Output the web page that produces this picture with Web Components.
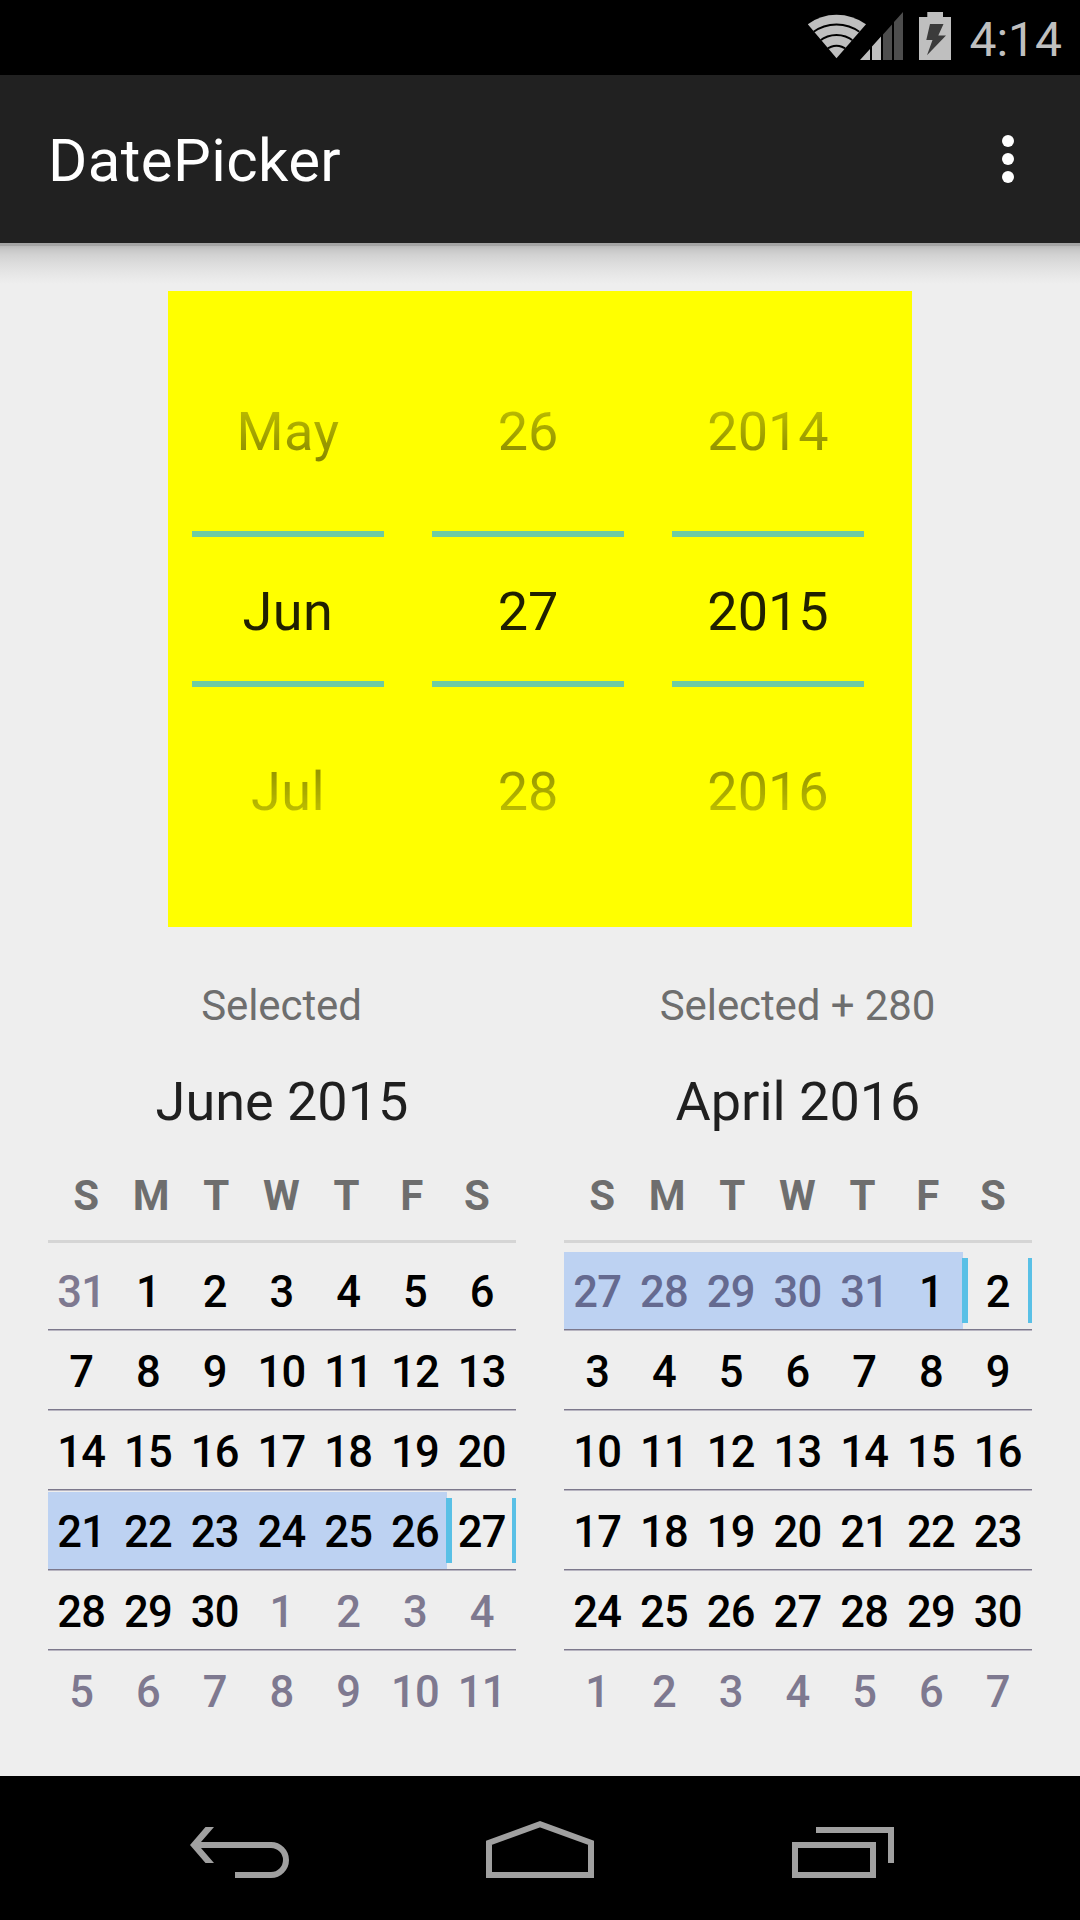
<!DOCTYPE html>
<html lang="en">
<head>
<meta charset="utf-8">
<title>DatePicker</title>
<style>
html,body{margin:0;padding:0}
body{width:1080px;height:1920px;overflow:hidden;background:#eee;font-family:Roboto,"Noto Sans",sans-serif}
</style>
</head>
<body>
<dp-screen>
  <dp-status-bar slot="status" time="4:14"></dp-status-bar>
  <dp-app-bar slot="appbar">DatePicker</dp-app-bar>
  <dp-date-spinner>
    <dp-wheel values="May,Jun,Jul" style="letter-spacing:.5px"></dp-wheel>
    <dp-wheel values="26,27,28"></dp-wheel>
    <dp-wheel values="2014,2015,2016"></dp-wheel>
  </dp-date-spinner>
  <dp-calendars>
    <dp-calendar year="2015" month="6" day="27">Selected</dp-calendar>
    <dp-calendar year="2016" month="4" day="2">Selected + 280</dp-calendar>
  </dp-calendars>
  <dp-nav-bar slot="nav"></dp-nav-bar>
</dp-screen>
<script>
class Base extends HTMLElement {
  connectedCallback() {
    if (!this.shadowRoot) this.attachShadow({mode: 'open'}).innerHTML = this.view();
  }
}

customElements.define('dp-screen', class extends Base {
  view() { return `<style>
    :host{display:flex;flex-direction:column;width:1080px;height:1920px}
    main{flex:1;display:flex;flex-direction:column;align-items:center;padding-top:48px;gap:48px;
      background:linear-gradient(#a4a4a4 0 3px,#bababa 3px,#c8c8c8 7px,#d2d2d2 12px,#dcdcdc 20px,#e3e3e3 27px,#e9e9e9 34px,#eee 41px)}
    </style><slot name="status"></slot><slot name="appbar"></slot><main><slot></slot></main><slot name="nav"></slot>`; }
});

customElements.define('dp-status-bar', class extends Base {
  view() { return `<style>
    :host{display:flex;justify-content:flex-end;height:75px;background:#000;color:#bfbfbf;padding-right:18px}
    span{font-size:48px;line-height:79px;height:75px}
    svg{display:block;margin-right:16px}
    </style>
    <svg width="146" height="75" viewBox="807 0 146 75">
      <clipPath id="fan"><path d="M836.5 58.5 805 21.500V0H868V21.500Z"/></clipPath>
      <path fill="#bfbfbf" d="M836.500 58.200 807.800 24.300Q820.500 14.800 836.500 14.800T866 24.300Z"/>
      <g clip-path="url(#fan)" fill="none" stroke="#000" stroke-width="2">
        <path d="M812.500 32.500Q823.500 24.600 836.500 24.600T860.500 32.500"/>
        <path d="M819.500 41Q827 35 836.500 35T853.500 41"/>
        <path d="M826.500 49.500Q831 45.700 836.500 45.700T846.500 49.500"/>
      </g>
      <path fill="#bfbfbf" d="M860 60 870 49V60ZM872 60V46.500L881 36.500V60Z"/>
      <path fill="#4d4d4d" d="M883 60V34.500L892 24.500V60ZM894 60V22L903 12V60Z"/>
      <path fill="#bfbfbf" d="M927.300 12H943V17H951V60H919V17H927.300Z"/>
      <path fill="#3b3b3b" d="M930 24H943.500L938.300 35.500H946L927 55.300 932.500 40H926.300Z"/>
    </svg><span>${this.getAttribute('time')}</span>`; }
});

customElements.define('dp-app-bar', class extends Base {
  view() { return `<style>
    :host{display:flex;justify-content:space-between;height:168px;background:#212121;color:#fff;padding:0 66px 0 48px;font-size:60px;letter-spacing:.38px;line-height:172px;box-sizing:border-box}
    .more{display:flex;flex-direction:column;gap:6px;padding-top:60px}
    i{width:12px;height:12px;border-radius:50%;background:#fff}
    </style><slot></slot><div class="more"><i></i><i></i><i></i></div>`; }
});

customElements.define('dp-date-spinner', class extends Base {
  view() { return `<style>
    :host{display:flex;gap:48px;width:744px;height:636px;padding:48px 24px;box-sizing:border-box;background:#ff0}
    </style><slot></slot>`; }
});

customElements.define('dp-wheel', class extends Base {
  view() { return `<style>
    :host{display:grid;width:192px;height:540px}
    .list,.frame{grid-area:1/1}
    .list{height:537px;padding-top:3px;overflow:hidden;text-align:center;font-size:54px;line-height:180px;color:rgba(0,0,0,.87);
      -webkit-mask-image:linear-gradient(transparent,#000 228px,#000 312px,transparent);mask-image:linear-gradient(transparent,#000 228px,#000 312px,transparent)}
    .frame{align-self:center;height:144px;border:solid #6ecba2;border-width:6px 0}
    </style><div class="list">${this.getAttribute('values').split(',').map(v => `<div>${v}</div>`).join('')}</div><div class="frame"></div>`; }
});

customElements.define('dp-calendars', class extends Base {
  view() { return `<style>:host{display:flex;gap:48px}</style><slot></slot>`; }
});

customElements.define('dp-calendar', class extends Base {
  view() {
    const y = +this.getAttribute('year'), m = +this.getAttribute('month') - 1, d = +this.getAttribute('day');
    const first = new Date(y, m, 1);
    const lead = first.getDay();
    const title = first.toLocaleString('en-US', {month: 'long'}) + ' ' + y;
    let weeks = '';
    for (let w = 0; w < 6; w++) {
      const days = [];
      for (let c = 0; c < 7; c++) days.push(new Date(y, m, 1 - lead + w * 7 + c));
      const active = days.some(t => t.getMonth() === m && t.getDate() === d);
      weeks += `<div class="week${active ? ' active' : ''}">${days.map(t =>
        `<span${t.getMonth() !== m ? ' class="out"' : ''}>${t.getDate()}</span>`).join('')}</div>`;
    }
    return `<style>
    :host{display:flex;flex-direction:column;width:468px;text-align:center;
      --rule:linear-gradient(#7c788c,#7c788c) 0 78px/100% 1px no-repeat,linear-gradient(#b8b5c1,#b8b5c1) 0 79px/100% 1px no-repeat}
    .label{font-size:42px;letter-spacing:-.1px;padding-right:1px;line-height:61px;height:60px;color:#6e6e6e}
    h2{margin:18px 0 0;font-size:54px;font-weight:400;line-height:97px;height:97px;color:#1f1f1f}
    .names{display:flex;height:90px;padding:0 6.5px 0 5.5px;border-bottom:3px solid #d5d5d5;margin-bottom:8px;font-size:42px;font-weight:700;line-height:91px;color:#6e6e6e}
    .names span,.week span{flex:1 1 0;min-width:0}
    .week{display:flex;box-sizing:border-box;height:80px;padding-right:1px;font-size:43.5px;letter-spacing:-.7px;font-weight:500;line-height:84px;color:#000;background:var(--rule)}
    .week:last-child{background:none}
    .out{color:#7e7990}
    /* Shaded run of days, then the two bars that bracket the chosen day. */
    .active{background:var(--rule),
      linear-gradient(#59c0e6,#59c0e6) 398px 7px/6px 65px no-repeat,
      linear-gradient(#59c0e6,#59c0e6) 464px 7px/4px 65px no-repeat,
      linear-gradient(#bdd2f2,#bdd2f2) 0 1px/399px 77px no-repeat}
    .active .out{color:#656a90}
    </style>
    <div class="label"><slot></slot></div><h2>${title}</h2>
    <div class="names">${[...'SMTWTFS'].map(n => `<span>${n}</span>`).join('')}</div>${weeks}`;
  }
});

customElements.define('dp-nav-bar', class extends Base {
  view() { return `<style>
    :host{display:flex;height:144px;background:#000}
    svg{display:block}
    </style>
    <svg width="1080" height="144" viewBox="0 1776 1080 144" fill="none" stroke="#a0a0a0" stroke-width="6">
      <path fill="#a0a0a0" stroke="none" d="M190 1845 205.500 1827H214L201 1842V1848L214 1863H205.500Z"/>
      <path d="M200 1845H271A15 15 0 0 1 271 1875H235"/>
      <path d="M489 1875V1842.800L540 1824.200 591 1842.800V1875Z"/>
      <path d="M795 1845H873V1875H795ZM816 1830H891V1863"/>
    </svg>`; }
});
</script>
</body>
</html>
